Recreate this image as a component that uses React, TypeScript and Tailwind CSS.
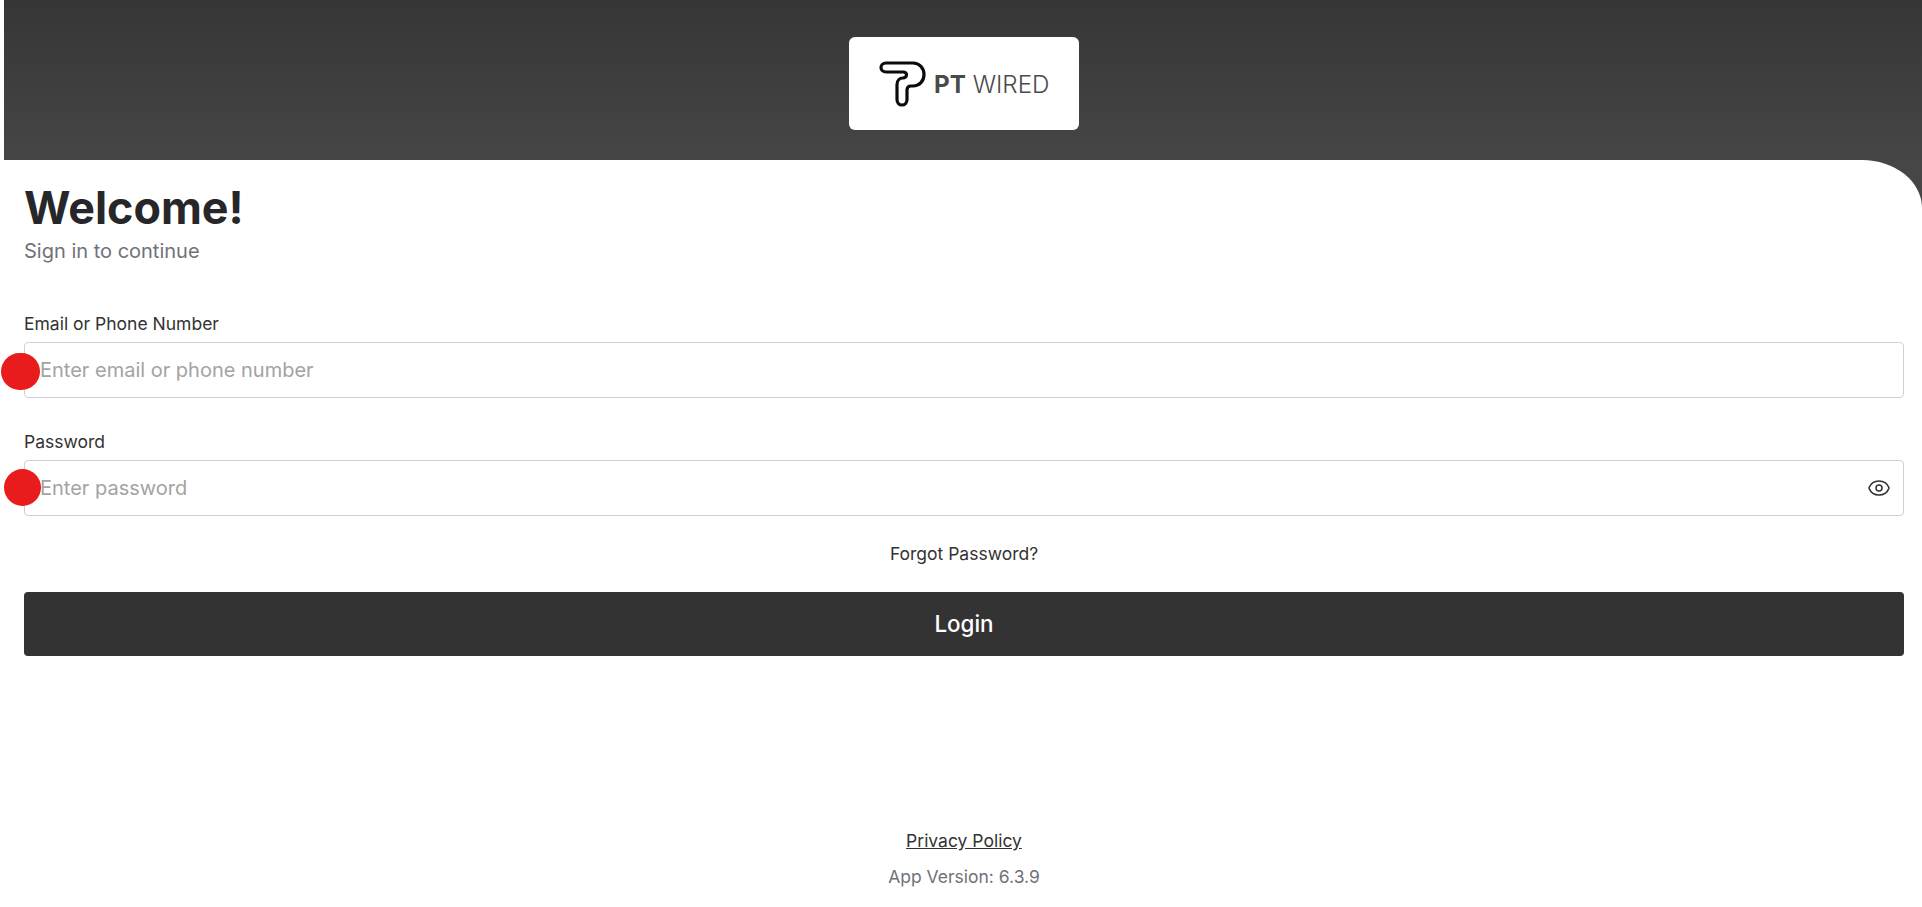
import React from "react";
import { Eye } from "lucide-react";

function Logo() {
  return (
    <div className="ml-[2px] flex h-[93px] w-[230px] items-center rounded-[6px] bg-white pl-[26px]">
      <svg width="55" height="55" viewBox="0 -0.5 55 55" fill="none" className="shrink-0">
        <path
          d="M11 6.5H38C44.5 6.5 49 11.5 49 18C49 24.5 44.5 29.5 38 29.5H36C33.5 29.5 32 31 32 33.5V43C32 46 30 48.5 27 48.5C24 48.5 22 46 22 43V28C22 24 24.5 21.5 28 21.5C30 21.5 31.5 20 31.5 18.5C31.5 16.5 30 15.5 28 15.5H11C8 15.5 6 13.5 6 11C6 8.5 8 6.5 11 6.5Z"
          stroke="#0b0b0b"
          strokeWidth="3.2"
          strokeLinejoin="round"
        />
      </svg>
      <span className="ml-[4px] mt-[3px] whitespace-nowrap font-['Inter',sans-serif] text-[24.2px] leading-none text-[#4a4a4a]">
        <span className="font-bold">PT</span> <span className="font-light">WIRED</span>
      </span>
    </div>
  );
}

function Field({
  label,
  placeholder,
  dotClass,
  eye,
}: {
  label: string;
  placeholder: string;
  dotClass: string;
  eye?: boolean;
}) {
  return (
    <div className="flex flex-col">
      <label className="mb-[4px] h-[28px] text-[17.5px] leading-[28px] text-[#333333]">{label}</label>
      <div className="relative flex h-[56px] items-center rounded-[4px] border border-[#d0d0d0] bg-white pl-[15px] pr-[12px]">
        <span className="flex-1 text-[20px] text-[#a3a3a3]">{placeholder}</span>
        {eye && <Eye size={24} strokeWidth={1.5} className="text-[#333333]" />}
        <span className={`absolute rounded-full bg-[#e81c1c] ${dotClass}`} />
      </div>
    </div>
  );
}

export default function App() {
  return (
    <div className="flex h-[907px] w-full flex-col overflow-hidden bg-white pl-[4px] font-['Inter',sans-serif]">
      <header className="flex h-[160px] shrink-0 justify-center bg-gradient-to-b from-[#363636] to-[#464646] pt-[37px]">
        <Logo />
      </header>
      <main className="ml-[-4px] flex flex-1 flex-col bg-[#464646]">
        <div className="flex flex-1 flex-col rounded-tr-[60px_48px] bg-white px-[24px] pr-[18px]">
          <h1 className="mt-[20px] text-[44.8px] font-bold leading-[56px] text-[#27272a]">Welcome!</h1>
          <p className="mt-[1px] text-[20px] leading-[28px] text-[#71717a]">Sign in to continue</p>
          <div className="mt-[45px] flex flex-col gap-[30px]">
            <Field
              label="Email or Phone Number"
              placeholder="Enter email or phone number"
              dotClass="left-[-24px] top-[10px] h-[37px] w-[39px]"
            />
            <Field
              label="Password"
              placeholder="Enter password"
              dotClass="left-[-21px] top-[8px] h-[37px] w-[37px]"
              eye
            />
          </div>
          <p className="mt-[24px] text-center text-[17.5px] leading-[28px] text-[#333333]">Forgot Password?</p>
          <button className="mt-[24px] h-[64px] w-full rounded-[4px] bg-[#333333] text-[22.4px] font-medium text-white">
            Login
          </button>
          <div className="mt-auto flex flex-col items-center pb-[16px]">
            <a className="text-[17.5px] leading-[28px] text-[#333333] underline">Privacy Policy</a>
            <p className="mt-[8px] text-[17.5px] leading-[28px] text-[#71717a]">App Version: 6.3.9</p>
          </div>
        </div>
      </main>
    </div>
  );
}
